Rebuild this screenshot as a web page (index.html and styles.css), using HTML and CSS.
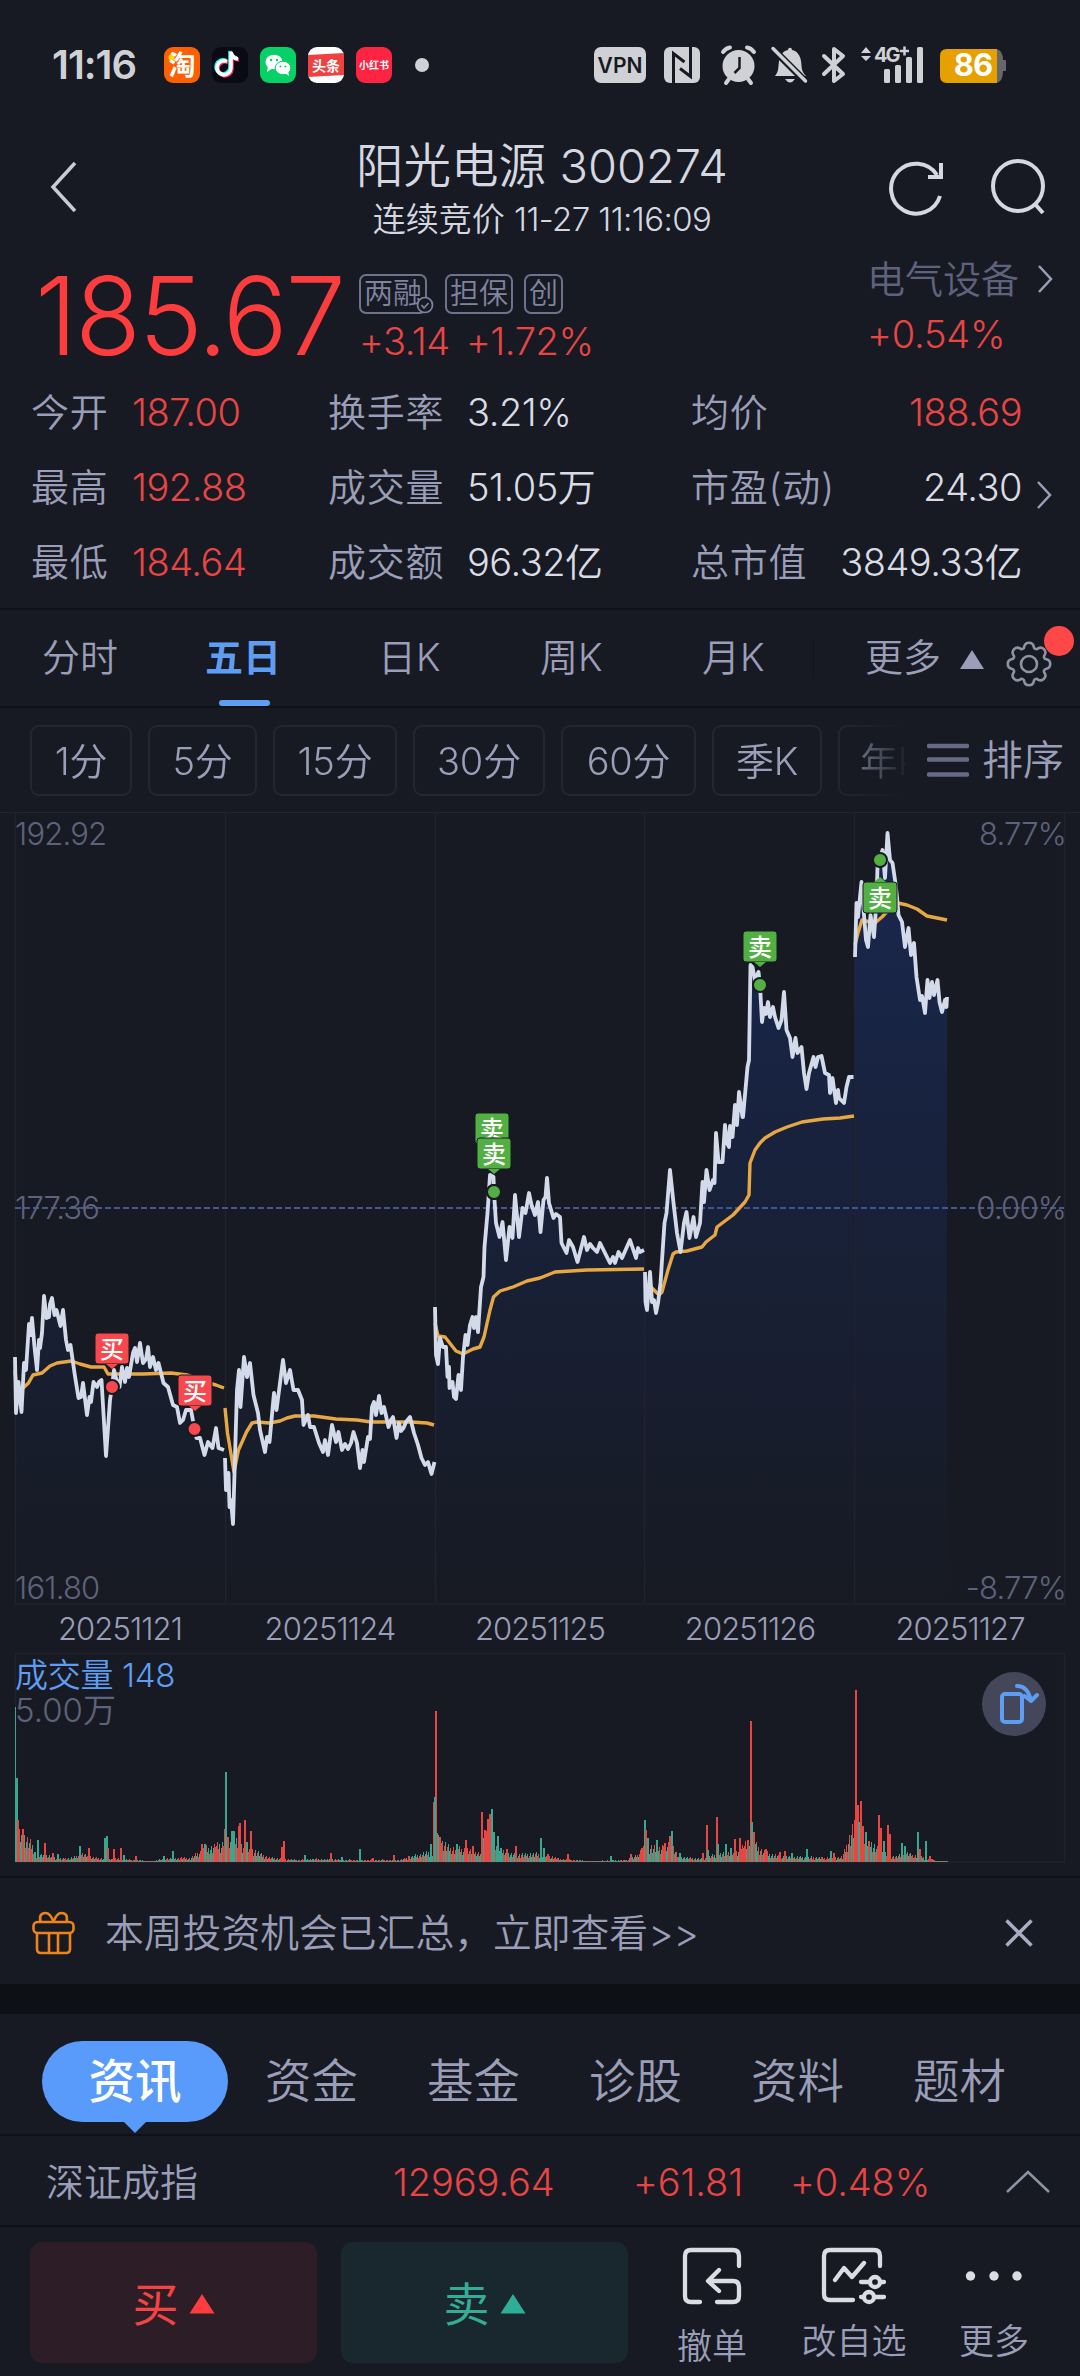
FILE: index.html
```html
<!DOCTYPE html>
<html lang="zh-CN">
<head>
    <meta charset="UTF-8">
    <meta name="viewport" content="width=device-width, initial-scale=1">
    <title>阳光电源 300274</title>
    <link rel="stylesheet" href="styles.css">
</head>
<body>
<div class="status">
    <span class="clock">11:16</span>
    <div class="apps">
        <svg width="36" height="36" viewBox="0 0 36 36"><rect width="36" height="36" rx="9" fill="#fd6000"/><circle cx="7.500" cy="10.500" r="3" fill="#ffd800"/><text class="app-text" x="18" y="28" font-size="27">淘</text></svg>
        <svg width="36" height="36" viewBox="0 0 36 36"><rect width="36" height="36" rx="9" fill="#090a14"/>
            <g fill="none" stroke-width="3.600"><path d="M17 14.500a7 7 0 1 0 4 6.500V5c.5 4 3 6.500 7 7" stroke="#ff2c55" transform="translate(-1 1)"/><path d="M17 14.500a7 7 0 1 0 4 6.500V5c.5 4 3 6.500 7 7" stroke="#25f4ee" transform="translate(-3 -1)"/><path d="M17 14.500a7 7 0 1 0 4 6.500V5c.5 4 3 6.500 7 7" stroke="#fff" transform="translate(-2 0)"/></g></svg>
        <svg width="36" height="36" viewBox="0 0 36 36"><rect width="36" height="36" rx="9" fill="#06d167"/><ellipse cx="14" cy="15" rx="8.500" ry="7.300" fill="#fff"/><path d="M8 19l-1 6 6-4z" fill="#fff"/><ellipse cx="23" cy="21" rx="7.800" ry="6.800" fill="#fff" stroke="#06d167"/><path d="M25 26l4 3-1-5z" fill="#fff"/><g fill="#06d167"><circle cx="11" cy="13" r="1.200"/><circle cx="17" cy="13" r="1.200"/><circle cx="20.500" cy="19.500" r="1"/><circle cx="25.500" cy="19.500" r="1"/></g></svg>
        <svg width="36" height="36" viewBox="0 0 36 36"><rect width="36" height="36" rx="9" fill="#fff"/><path d="M0 8l36-2v22L0 30z" fill="#f04142"/><text class="app-text" x="18" y="23.500" font-size="14">头条</text></svg>
        <svg width="36" height="36" viewBox="0 0 36 36"><rect width="36" height="36" rx="9" fill="#ff2442"/><text class="app-text" x="18" y="22" font-size="10">小红书</text></svg>
    </div>
    <i class="more-dot"></i>
    <svg class="sys" width="412" height="42" viewBox="0 0 412 42">
        <g fill="#d0d1d5">
            <rect x="0" y="3" width="52" height="36" rx="7"/>
            <text class="vpn" x="26" y="29">VPN</text>
            <rect x="70" y="3" width="36" height="36" rx="6"/>
            <g fill="none" stroke="#171a22" stroke-width="3"><path d="M79.500 40V9.500l11 8.500"/><path d="M96.500 2v30.500L86 24.500"/></g>
            <circle cx="144.500" cy="22" r="16"/>
            <g fill="none" stroke="#d0d1d5" stroke-width="4" stroke-linecap="round"><path d="M129 8q3-4 7-4.500M160 8q-3-4-7-4.500M135 35l-3 4M154 35l3 4"/></g>
            <path d="M145.500 13v11l-5 5" fill="none" stroke="#171a22" stroke-width="2.500"/>
            <path d="M181 32c4-5 3-8 4-15 1-6 4-10 9-11 0-3 4-3 4 0 5 1 8 5 9 11 1 7 0 10 5 15zM191 35h10q-5 7-10 0z"/>
            <path d="M177 3l36 36" stroke="#171a22" stroke-width="7"/><path d="M179 4.500L211.500 37" stroke="#d0d1d5" stroke-width="3.500" stroke-linecap="round"/>
            <path d="M230 12l19 18-9 7V5l9 7-19 18" fill="none" stroke="#d0d1d5" stroke-width="4" stroke-linejoin="round" stroke-linecap="round"/>
            <path d="M267 9l5-6 5 6zM267 12h10l-5 5z"/>
            <text class="net" x="280" y="18">4G</text>
            <path d="M306 7h9M310.500 2.500v9" stroke="#d0d1d5" stroke-width="2.500"/>
            <rect x="290" y="25" width="6" height="14" rx="1.500"/><rect x="301" y="21" width="6" height="18" rx="1.500"/><rect x="312" y="13" width="6" height="26" rx="1.500"/><rect x="323" y="3" width="6" height="36" rx="1.500"/>
        </g>
        <path d="M402 5q7 1 7 11h2q2 0 2 3v5q0 3-2 3h-2q0 11-7 12z" fill="#66676a"/>
        <path d="M353 5h50v34h-50q-7 0-7-7V12q0-7 7-7z" fill="#e6a100"/>
        <text class="bat" x="379" y="32">86</text>
    </svg>
</div>

<div class="header">
    <svg class="back" width="30" height="54" viewBox="0 0 30 54"><path d="M26 3L4 27l22 24" fill="none" stroke="#c9cbd6" stroke-width="3.500"/></svg>
    <div class="title">
        <h1>阳光电源 <span>300274</span></h1>
        <p>连续竞价 <span>11-27 11:16:09</span></p>
    </div>
    <div class="tools">
        <svg width="58" height="60" viewBox="0 0 58 60"><path d="M49 16A25 25 0 1 0 52 37" fill="none" stroke="#d5d7e1" stroke-width="4"/><path d="M53 4v14H40" fill="none" stroke="#d5d7e1" stroke-width="4"/></svg>
        <svg width="58" height="60" viewBox="0 0 58 60"><circle cx="28" cy="27" r="25" fill="none" stroke="#d5d7e1" stroke-width="4"/><path d="M45 45l8 9" stroke="#d5d7e1" stroke-width="4"/></svg>
    </div>
</div>

<div class="quote">
    <div class="price">185.67</div>
    <div class="delta">
        <div class="tags"><span class="tag tag-check">两融<svg width="18" height="18" viewBox="0 0 18 18"><circle cx="9" cy="9" r="7.500" fill="#171a22" stroke="#8083a0" stroke-width="1.700"/><path d="M5.500 9l2.500 3 4.500-5" fill="none" stroke="#8083a0" stroke-width="1.700"/></svg></span><span class="tag">担保</span><span class="tag">创</span></div>
        <div class="change"><span>+3.14</span><span>+1.72%</span></div>
    </div>
    <div class="sector">
        <div class="sector-name">电气设备<svg width="18" height="30" viewBox="0 0 18 30"><path d="M3 2l12 13L3 28" fill="none" stroke="#9a9eb8" stroke-width="2.500"/></svg></div>
        <div class="sector-rate">+0.54%</div>
    </div>
</div>

<div class="stats">
    <div class="stats-grid">
        <span>今开</span><b class="up">187.00</b><span>换手率</span><b>3.21%</b><span>均价</span><b class="up end">188.69</b>
        <span>最高</span><b class="up">192.88</b><span>成交量</span><b>51.05万</b><span>市盈(动)</span><b class="end">24.30</b>
        <span>最低</span><b class="up">184.64</b><span>成交额</span><b>96.32亿</b><span>总市值</span><b class="end">3849.33亿</b>
    </div>
    <svg class="stats-more" width="18" height="30" viewBox="0 0 18 30"><path d="M3 2l12 13L3 28" fill="none" stroke="#9a9eb8" stroke-width="2.500"/></svg>
</div>

<div class="tabs">
    <span>分时</span><span class="active">五日</span><span>日K</span><span>周K</span><span>月K</span>
    <i class="sep"></i>
    <span class="tab-more">更多</span>
    <svg class="tri" width="26" height="20" viewBox="0 0 26 20"><path d="M13 0l12 19H1z" fill="#9a9eb8"/></svg>
    <div class="gear">
        <svg width="50" height="50" viewBox="-25 -25 50 50" fill="none" stroke="#8d93a3" stroke-width="2.600">
            <circle r="8"/>
            <path d="M17.400-4.700A4.800 4.800 0 0 1 17.400 4.700A2.600 2.600 0 0 0 15.600 9A4.800 4.800 0 0 1 9 15.600A2.600 2.600 0 0 0 4.700 17.400A4.800 4.800 0 0 1-4.700 17.400A2.600 2.600 0 0 0-9 15.600A4.800 4.800 0 0 1-15.600 9A2.600 2.600 0 0 0-17.400 4.700A4.800 4.800 0 0 1-17.400-4.700A2.600 2.600 0 0 0-15.600-9A4.800 4.800 0 0 1-9-15.600A2.600 2.600 0 0 0-4.700-17.400A4.800 4.800 0 0 1 4.700-17.400A2.600 2.600 0 0 0 9-15.600A4.800 4.800 0 0 1 15.600-9A2.600 2.600 0 0 0 17.400-4.700z"/>
        </svg>
        <i class="badge"></i>
    </div>
</div>

<div class="periods">
    <div class="period-list">
        <span class="p1">1分</span><span class="p2">5分</span><span class="p3">15分</span><span class="p4">30分</span><span class="p5">60分</span><span class="p6">季K</span><span class="p7">年K</span>
    </div>
    <div class="sort"><svg width="42" height="34" viewBox="0 0 42 34"><path d="M2 3h38M2 16.500h38M2 31.500h38" stroke="#656a86" stroke-width="4.500" stroke-linecap="round"/></svg>排序</div>
</div>

<div class="chart">
    <svg width="1080" height="793" viewBox="0 812 1080 793">
        <defs>
            <linearGradient id="area" gradientUnits="userSpaceOnUse" x1="0" y1="833" x2="0" y2="1604">
                <stop offset="0" stop-color="#1e48b8" stop-opacity=".3"/>
                <stop offset="1" stop-color="#1e48b8" stop-opacity="0"/>
            </linearGradient>
        </defs>
        <path d="M0 812.500H1080" stroke="#232630"/>
        <path d="M15.500 813V1604H1064.500V813M225.500 813V1604M435.500 813V1604M644.500 813V1604M854.500 813V1604" fill="none" stroke="#20232e" stroke-width="1.500"/>
        <path d="M15 1208H1064" stroke="#46578a" stroke-width="2" stroke-dasharray="6 3"/>
        <g id="areas" fill="url(#area)"></g>
        <g id="averages" fill="none" stroke="#e7a844" stroke-width="3.400" stroke-linejoin="round"></g>
        <g id="prices" fill="none" stroke="#d3daea" stroke-width="3.800" stroke-linejoin="round"></g>
        <g id="marks"></g>
    </svg>
    <span class="axis top-left">192.92</span><span class="axis top-right">8.77%</span>
    <span class="axis mid-left">177.36</span><span class="axis mid-right">0.00%</span>
    <span class="axis bottom-left">161.80</span><span class="axis bottom-right">-8.77%</span>
</div>
<div class="dates"><span>20251121</span><span>20251124</span><span>20251125</span><span>20251126</span><span>20251127</span></div>

<div class="volume">
    <svg width="1080" height="225" viewBox="0 1653 1080 225">
        <path d="M15.500 1653.500H1064.500V1862H15.500z" fill="none" stroke="#20232e" stroke-width="1.500"/>
        <g id="bars" shape-rendering="crispEdges"></g>
    </svg>
    <div class="volume-label">成交量 148</div>
    <div class="volume-max">5.00万</div>
    <div class="rotate"><svg width="64" height="64" viewBox="0 0 64 64" fill="none" stroke="#5f9df2" stroke-width="4" stroke-linecap="round" stroke-linejoin="round"><rect x="20" y="22" width="20" height="28" rx="3"/><path d="M35 14q11 0 14 15M42.500 24l6.500 5 6-6"/></svg></div>
</div>

<div class="banner">
    <svg width="44" height="46" viewBox="0 0 44 46" fill="none" stroke="#ee8418" stroke-width="2.600"><rect x="1.500" y="12" width="40" height="11" rx="4"/><path d="M5 23v16q0 4 4 4h25q4 0 4-4V23M17 23v20M26 23v20M21.500 12q-3-9-8-9-7 0-5 9M21.500 12q3-9 8-9 7 0 5 9"/></svg>
    <p>本周投资机会已汇总，立即查看&gt;&gt;</p>
    <svg width="28" height="28" viewBox="0 0 28 28"><path d="M1.500 1.500l25 25M26.500 1.500l-25 25" stroke="#a9adc4" stroke-width="3.500"/></svg>
</div>
<div class="band"></div>

<div class="info-tabs">
    <span class="pill">资讯</span><span>资金</span><span>基金</span><span>诊股</span><span>资料</span><span>题材</span>
</div>

<div class="index-row">
    <span class="index-name">深证成指</span><span class="index-value">12969.64</span><span class="index-diff">+61.81</span><span class="index-rate">+0.48%</span>
    <svg width="44" height="24" viewBox="0 0 44 24"><path d="M1 22L22 2l21 20" fill="none" stroke="#8d93a3" stroke-width="2.500"/></svg>
</div>

<div class="actions">
    <div class="buy">买<svg width="26" height="20" viewBox="0 0 26 20"><path d="M13 0l12.500 19.500H.5z" fill="#fd3d3d"/></svg></div>
    <div class="sell">卖<svg width="26" height="20" viewBox="0 0 26 20"><path d="M13 0l12.500 19.500H.5z" fill="#2eae96"/></svg></div>
    <div class="act act-cancel">
        <svg width="60" height="60" viewBox="0 0 60 60" fill="none" stroke="#dcdde4" stroke-width="4.300" stroke-linecap="round" stroke-linejoin="round"><path d="M57 19V9q0-6-6-6H9Q3 3 3 9v40q0 6 6 6h9M35 55h16q6 0 6-6V40q0-6-6-6H27M37 23L26 34l11 10"/></svg>
        <span>撤单</span>
    </div>
    <div class="act act-fav">
        <svg width="66" height="60" viewBox="0 0 66 60" fill="none" stroke="#dcdde4" stroke-width="4.300" stroke-linecap="round" stroke-linejoin="round"><path d="M59 19V9q0-6-6-6H9Q3 3 3 9v38q0 6 6 6h23M14 33l9-12 8 9 12-14M40 35h8M60 35h3M40 50h2M54 50h9"/><circle cx="54" cy="35" r="5"/><circle cx="48" cy="50" r="5"/></svg>
        <span>改自选</span>
    </div>
    <div class="act act-more">
        <svg width="60" height="60" viewBox="0 0 60 60" fill="#dcdde4"><circle cx="6.500" cy="29" r="4.700"/><circle cx="30" cy="29" r="4.700"/><circle cx="53" cy="29" r="4.700"/></svg>
        <span>更多</span>
    </div>
</div>
<script src="chart.js"></script>
</body>
</html>
```
FILE: styles.css
```css
* {
    box-sizing: border-box;
}

body {
    margin: 0;
    width: 1080px;
    height: 2376px;
    overflow: hidden;
    background: #171a22;
    color: #9a9eb8;
    font-family: Inter, "Noto Sans CJK SC", sans-serif;
    font-weight: 350;
    font-size: 38px;
    line-height: 1;
    white-space: nowrap;
}

h1, p {
    margin: 0;
    font-weight: 350;
}

svg {
    display: block;
    flex: none;
}

/* 状态栏 */
.status {
    display: flex;
    align-items: center;
    height: 130px;
    padding-left: 52px;
}

.clock {
    width: 112px;
    font-size: 40px;
    font-weight: 600;
    letter-spacing: -1px;
    color: #d0d1d5;
}

.apps {
    display: flex;
    gap: 12px;
}

.app-text {
    fill: #fff;
    font-weight: 700;
    text-anchor: middle;
}

.more-dot {
    width: 14px;
    height: 14px;
    margin: 0 165px 0 23px;
    border-radius: 50%;
    background: #d0d1d5;
}

.vpn {
    fill: #171a22;
    font-size: 21px;
    font-weight: 600;
    text-anchor: middle;
}

.net {
    fill: #d0d1d5;
    font-size: 20px;
    font-weight: 700;
    letter-spacing: -2px;
}

.bat {
    fill: #fff;
    font-size: 31px;
    font-weight: 700;
    letter-spacing: -1px;
    text-anchor: middle;
}

/* 标题 */
.header {
    display: flex;
    align-items: center;
    height: 120px;
    padding: 0 32px 0 49px;
    color: #d5d7e1;
}

.back {
    margin-top: -6px;
}

.title {
    width: 380px;
    margin-left: 273px;
    text-align: center;
}

.title h1 {
    height: 57px;
    line-height: 57px;
    font-size: 47.5px;
}

.title h1 span {
    font-size: 47px;
}

.title p {
    height: 49px;
    line-height: 51px;
    font-size: 33px;
}

.title p span {
    letter-spacing: -.6px;
}

.tools {
    display: flex;
    gap: 44px;
    margin: -3px 0 0 auto;
}

/* 报价 */
.quote {
    display: flex;
    height: 124px;
    padding: 22px 0 0 35px;
    color: #e84545;
}

.price {
    width: 324px;
    line-height: 87px;
    font-size: 108px;
    font-weight: 350;
    letter-spacing: -2.4px;
    color: #fd3d3d;
}

.tags {
    display: flex;
    gap: 11px;
    height: 42px;
    padding-top: 2px;
}

.tag {
    position: relative;
    height: 40px;
    padding: 0 3px;
    border: 2px solid #6f728d;
    border-radius: 7px;
    line-height: 36px;
    font-size: 29px;
    color: #8083a0;
}

.tag-check {
    margin-right: 7px;
}

.tag-check svg {
    position: absolute;
    right: -9px;
    bottom: -2px;
}

.change {
    display: flex;
    gap: 16px;
    padding-top: 8px;
    letter-spacing: -.4px;
}

.sector {
    margin-left: auto;
    width: 213px;
}

.sector-name {
    display: flex;
    justify-content: space-between;
    align-items: center;
    width: 187px;
    height: 36px;
    margin-top: -11px;
    color: #5e627c;
}

.sector-rate {
    padding-top: 18px;
    letter-spacing: -.2px;
}

/* 行情数据 */
.stats {
    display: flex;
    align-items: center;
    height: 236px;
    padding-left: 31px;
    border-bottom: 2px solid #0e1118;
}

.stats-grid {
    display: grid;
    grid-template-columns: 100px 197px 138px 225px 140px 191px;
    grid-auto-rows: 75px;
    align-items: center;
    margin-top: -8px;
}

.stats-grid span {
    letter-spacing: .7px;
}

.stats-grid b {
    padding-left: 1px;
    font-weight: 350;
    letter-spacing: -.5px;
    color: #dadce5;
}

.stats-grid .up {
    color: #e84545;
}

.stats-grid .end {
    text-align: right;
}

.stats-more {
    margin: 8px 0 0 13px;
}

/* 主标签 */
.tabs {
    display: flex;
    align-items: center;
    position: relative;
    height: 98px;
    padding-left: 42px;
    border-bottom: 2px solid #0e1118;
}

.tabs span {
    width: 162px;
    height: 96px;
    line-height: 95px;
}

.tabs .active {
    width: 174px;
    padding-left: 1px;
    color: #5f9df2;
    font-weight: 700;
}

.active::after {
    content: "";
    display: block;
    width: 51px;
    height: 6px;
    margin: -5px 0 0 14px;
    border-radius: 3px;
    background: #5f9df2;
}

.sep {
    width: 1px;
    height: 40px;
    margin: 0 51px 0 -51px;
    background: #10131a;
}

.tabs .tab-more {
    width: 94px;
}

.tri {
    margin-top: 4px;
}

.gear {
    position: relative;
    margin: 11px 0 0 19px;
}

.badge {
    position: absolute;
    left: 40px;
    top: -13px;
    width: 30px;
    height: 30px;
    border-radius: 50%;
    background: #fe4848;
}

/* 周期 */
.periods {
    display: flex;
    align-items: center;
    height: 104px;
    padding-left: 30px;
}

.period-list {
    display: flex;
    gap: 16px;
    width: 875px;
    overflow: hidden;
    -webkit-mask-image: linear-gradient(90deg, #000 800px, transparent 880px);
    mask-image: linear-gradient(90deg, #000 800px, transparent 880px);
}

.period-list span {
    flex: none;
    height: 71px;
    border: 2px solid #242733;
    border-radius: 9px;
    line-height: 69px;
    text-align: center;
    letter-spacing: -.2px;
}

.p1 { width: 102px; }
.p2 { width: 109px; }
.p3 { width: 124px; }
.p4 { width: 132px; }
.p5 { width: 135px; }
.p6 { width: 110px; }
.p7 { width: 106px; }

.sort {
    display: flex;
    align-items: center;
    gap: 13px;
    margin-left: 22px;
    font-size: 41px;
}

/* 走势图 */
.chart {
    position: relative;
    height: 793px;
}

.axis {
    position: absolute;
    font-size: 31px;
    letter-spacing: -.8px;
    color: #5e627c;
}

.top-left, .mid-left, .bottom-left { left: 15px; }
.top-right, .mid-right, .bottom-right { right: 14px; }
.top-left, .top-right { top: 6px; }
.mid-left, .mid-right { top: 380px; }
.bottom-left, .bottom-right { top: 760px; }

.mark {
    fill: #fff;
    font-size: 24px;
    font-weight: 500;
    text-anchor: middle;
}

.dates {
    display: flex;
    height: 48px;
    padding-left: 15px;
    line-height: 48px;
    font-size: 31px;
    letter-spacing: -.9px;
}

.dates span {
    width: 210px;
    text-align: center;
}

.volume {
    position: relative;
    height: 225px;
    border-bottom: 2px solid #0e1118;
}

.volume-label {
    position: absolute;
    left: 15px;
    top: 6px;
    font-size: 33px;
    letter-spacing: -.3px;
    color: #5f9df2;
}

.volume-max {
    position: absolute;
    left: 15px;
    top: 41px;
    font-size: 33px;
    color: #5e627c;
}

.rotate {
    position: absolute;
    left: 982px;
    top: 19px;
    border-radius: 50%;
    background: #434759;
}

/* 提示条 */
.banner {
    display: flex;
    align-items: center;
    height: 106px;
    padding: 4px 47px 0 32px;
}

.banner p {
    width: 900px;
    margin-left: 29px;
    font-size: 38.8px;
}

.band {
    height: 30px;
    background: #0d1015;
}

.info-tabs {
    display: flex;
    height: 122px;
    padding: 27px 0 0 42px;
    border-bottom: 2px solid #0e1118;
    line-height: 81px;
    font-size: 46.5px;
}

.info-tabs span {
    width: 162px;
}

.info-tabs .pill {
    position: relative;
    width: 186px;
    height: 81px;
    margin-right: 37px;
    border-radius: 41px;
    text-align: center;
    background: #589bfb;
    color: #fff;
    font-weight: 500;
}

.pill::after {
    content: "";
    position: absolute;
    left: 81px;
    top: 80px;
    border: 12px solid transparent;
    border-top-color: #589bfb;
    border-bottom-width: 0;
}

.index-row {
    display: flex;
    align-items: center;
    height: 91px;
    padding: 2px 0 0 46px;
    border-bottom: 2px solid #0e1118;
    color: #e84545;
}

.index-name {
    width: 347px;
    color: #9a9eb8;
}

.index-value, .index-diff, .index-rate {
    letter-spacing: -.1px;
}

.index-value { width: 240px; }
.index-diff { width: 157px; }
.index-rate { width: 216px; }

/* 底部操作 */
.actions {
    display: flex;
    padding: 15px 0 0 30px;
}

.buy, .sell {
    display: flex;
    align-items: center;
    justify-content: center;
    gap: 10px;
    width: 287px;
    height: 121px;
    margin-right: 24px;
    padding-top: 3px;
    border-radius: 12px;
    font-size: 46px;
    font-weight: 400;
}

.buy {
    background: #2d1d26;
    color: #f54343;
}

.sell {
    background: #19272e;
    color: #35ad96;
}

.act {
    display: flex;
    flex-direction: column;
    align-items: center;
    padding-top: 5px;
    font-size: 35px;
}

.act span {
    margin-top: 17px;
}

.act-cancel {
    width: 120px;
}

.act-cancel span {
    margin-top: 22px;
}

.act-fav {
    width: 160px;
    margin-left: 2px;
}

.act-more {
    width: 120px;
}
```
FILE: chart.js
```js
var BOTTOM = 1604;

// 五日分时价格，每天一组 x,y
var prices = [
    '15,1357 16,1413 18.5,1382 21.5,1412 24,1363 26,1370 29,1324 30.500,1335 32,1318 34.5,1347 37,1370 39,1340 40,1348 42,1333 44,1296 46.5,1318 49,1317 50,1304 52,1298 54.5,1315 56.5,1310 60.5,1326 63,1310 66,1340 68,1350 70.5,1345 74.5,1373 78.5,1398 81,1397 83,1383 87,1415 89.5,1397 91,1402 93.5,1382 97,1387 99,1382 101.5,1380 106,1456 110,1400 112,1387 114,1370 117,1382 119.5,1387 122,1367 125,1382 127,1368 129,1377 133,1353 135,1348 137,1362 140,1343 143,1363 146,1359 148,1347 150,1367 153,1357 156,1370 158.5,1363 163.5,1383 168,1387 173,1405 177,1407 180,1423 183,1420 186,1410 191,1410 194.5,1429 196.5,1438 200,1438 204.5,1455 208,1442 212.5,1448 216,1428 218.5,1448 224,1450',
    '225,1458 226,1490 228.5,1473 229.5,1507 231,1500 233,1524 235.5,1440 237,1390 239,1370 240.5,1407 244,1357 247,1377 250,1363 253.5,1395 258,1413 260,1430 265,1452 267,1437 269.5,1442 274,1393 276.5,1410 280,1383 283,1360 286,1383 290,1370 293.5,1390 298,1390 302,1400 303.5,1425 308,1415 310,1427 314,1427 319,1443 323,1452 325,1440 328,1455 332,1425 336,1442 338.5,1432 342,1450 345,1444 348,1449 351,1443 353.5,1432 357,1443 360,1468 362.5,1450 364,1462 368,1437 370,1439 372,1407 374,1402 376,1415 379,1396 381.5,1413 384,1407 388.5,1427 391,1420 393,1417 396.5,1438 399,1423 401,1431 403.5,1428 406,1422 410,1417 414,1433 418,1445 421.5,1458 425,1465 428,1462 431.5,1474 434.5,1462',
    '435,1307 436,1355 438,1364 440,1338 443,1347 446,1347 447.5,1377 449,1367 449.5,1388 452.5,1382 454,1397 456,1399 458.5,1375 461,1390 463,1357 465.5,1335 467.5,1345 470,1325 472.5,1317 474,1328 476,1317 478,1332 481,1287 483.5,1277 484.5,1247 487.5,1213 490,1175 493.5,1177 494,1192 496,1223 499.5,1237 502.5,1222 506,1260 509.5,1227 512.5,1238 515,1195 519,1237 522.5,1208 525.5,1213 529,1193 531.5,1205 535,1215 538,1202 540.5,1232 543.5,1200 545.5,1197 547,1178 549,1203 553.5,1218 556,1214 560,1217 561.5,1243 566.5,1253 569,1240 573,1247 577.5,1262 584,1237 587,1250 590,1244 593,1248 597,1252 600,1243 605,1253 610,1263 613,1257 615,1263 618.5,1252 622,1258 630,1240 636,1258 638,1248 640,1252 644,1250',
    '645,1272 645.500,1302 647,1310 650,1272 652,1302 654,1300 656,1313 658,1303 660.5,1283 664.5,1223 666.5,1213 670,1170 673.5,1203 677,1233 680.5,1252 684,1223 686.5,1212 689.5,1238 693.5,1217 696,1237 700,1223 702.5,1182 704,1202 706.5,1170 709.5,1190 713,1180 714.5,1183 716,1133 718.5,1162 722.5,1162 725,1125 727,1143 729,1147 730,1126 732.5,1137 735,1105 737,1125 739,1092 742.5,1117 743,1117 747.5,1067 749,1060 750.5,965 752.5,967 755,980 758.5,972 760,985 762,1022 764,1008 766,1014 768,1002 770,1017 773,1007 775,1017 778.5,1028 781.5,1020 784,992 786.5,1030 790,1038 792.5,1057 795.5,1038 797.5,1053 801.5,1047 804,1073 806.5,1089 809,1073 813.5,1057 815.5,1067 818,1057 821.5,1056 825,1073 829,1075 830,1093 832.5,1078 836,1103 838,1090 839,1098 844,1103 846.5,1087 849,1077 853.5,1077',
    '855,957 856.5,903 858,917 861.5,882 864,915 866,940 868,947 870.5,915 874,937 876.5,900 877.5,867 880,860 882.5,850 885,878 887.5,833 890,860 892.5,863 895,880 897,897 898.5,915 902,922 905,947 908.5,928 911,955 914,943 916.5,977 920,1000 922,996 925,1013 927.5,980 929.5,998 932,982 934,995 937.5,980 939.5,1002 942,1012 945,1000 946.5,1007 947,997'
];

var averages = [
    '15,1370 16,1382 19,1390 22,1389 28.5,1383 33,1375 42,1373 50,1366 57,1363 71.5,1361 80,1364 91,1367 104,1367 108,1374 143,1374 171,1373 187.5,1375 212.5,1384 216,1385 224,1388',
    '225,1408 227.5,1433 234,1472 238.5,1450 246.5,1432 252,1423 257,1422 269.5,1423 280,1421 287,1418 295,1416 314,1416 336,1419 357,1420 371,1422 411,1422 427,1423 434,1425',
    '435,1323 438,1336 445,1337 456,1351 463,1354 473,1349 480,1347 484,1337 490,1310 493.5,1297 500,1291 513,1287 527,1281 540,1278 555,1272 587,1270 644,1269',
    '645,1287 652,1288 659,1295 662,1292 668,1270 673,1254 676,1252 687,1251 702,1247 706,1242 715,1235 717,1227 733,1215 745,1202 749,1195 750,1163 755,1150 760,1143 765,1138 775,1132 787,1127 802,1122 823,1119 840,1118 854,1116',
    '855,945 858,933 862,920 870,922 875,923 882,917 893,905 898,903 907,905 917,909 927,916 937,918 947,920'
];

function add(id, markup) {
    document.getElementById(id).innerHTML += markup;
}

prices.forEach(function (points) {
    var list = points.split(' ');
    var x0 = list[0].split(',')[0];
    var x1 = list[list.length - 1].split(',')[0];
    add('areas', '<polygon points="' + x0 + ',' + BOTTOM + ' ' + points + ' ' + x1 + ',' + BOTTOM + '"/>');
    add('prices', '<polyline points="' + points + '"/>');
});
averages.forEach(function (points) {
    add('averages', '<polyline points="' + points + '"/>');
});

// 买卖点：文字、标签左上角、圆点
var marks = [
    ['买', 95, 1333, 112, 1387],
    ['买', 178, 1375, 194.5, 1429],
    ['卖', 475, 1113, 494, 1192],
    ['卖', 477, 1138, 494, 1192],
    ['卖', 743, 931, 760, 985],
    ['卖', 863, 882, 880, 860]
];
marks.forEach(function (m) {
    var color = m[0] === '买' ? '#f8484d' : '#52b043';
    var x = m[1], y = m[2], cx = x + 17;
    var up = m[4] < y;
    var arrow = up ? 'M' + (cx - 6) + ' ' + y + 'l6-5 6 5z' : 'M' + (cx - 6) + ' ' + (y + 31) + 'l6 5 6-5z';
    add('marks', '<g fill="' + color + '"><rect x="' + x + '" y="' + y + '" width="34" height="31" rx="3" stroke="#171a22"/>' +
        '<path d="' + arrow + '"/><circle cx="' + m[3] + '" cy="' + m[4] + '" r="7" stroke="#171a22" stroke-width="2"/></g>' +
        '<text class="mark" x="' + cx + '" y="' + (y + 24.5) + '">' + m[0] + '</text>');
});

// 成交量：底部轮廓 [x, 高]
var base = [[15, 28], [24, 24], [32, 16], [36, 7], [48, 6], [60, 3], [72, 4], [80, 8], [90, 5], [103, 3], [120, 3], [150, 1], [172, 4], [190, 4], [205, 13], [224, 18], [236, 20], [252, 12], [266, 5], [280, 3], [300, 2], [310, 3], [345, 2], [400, 2], [418, 7], [432, 10], [436, 24], [448, 14], [465, 12], [480, 8], [484, 28], [492, 28], [500, 10], [515, 7], [540, 8], [560, 3], [590, 1], [626, 2], [636, 6], [645, 16], [656, 14], [672, 16], [678, 5], [700, 3], [716, 7], [735, 10], [750, 20], [765, 9], [780, 5], [830, 4], [842, 5], [855, 40], [868, 20], [880, 10], [895, 5], [905, 9], [915, 6], [930, 3], [938, 1], [948, 1]];
// 高量柱 [x, 高, 涨跌]
var peaks = [
    [15, 155, 0], [16, 84, 0], [17, 42, 1], [22, 33, 1], [37, 22, 0], [44, 19, 1], [52, 9, 1], [57, 8, 0], [79, 16, 0], [88, 14, 1], [104, 24, 0], [106, 26, 0], [107, 14, 1], [113, 13, 1], [120, 14, 1], [123, 7, 0], [135, 6, 1], [163, 6, 0], [172, 11, 0], [201, 18, 1], [204, 18, 0], [215, 15, 1], [222, 16, 1],
    [224, 33, 1], [225, 90, 0], [227, 25, 1], [231, 31, 0], [233, 31, 0], [238, 36, 1], [239, 39, 1], [244, 42, 1], [246, 20, 0], [250, 31, 1], [281, 15, 1], [283, 21, 1], [304, 7, 0], [330, 9, 1], [341, 5, 0], [359, 13, 0], [372, 4, 1], [393, 7, 1], [408, 6, 1], [430, 18, 0],
    [433, 60, 1], [435, 151, 1], [434, 65, 0], [437, 27, 0], [439, 25, 1], [441, 19, 1], [456, 18, 0], [465, 22, 1], [472, 16, 1], [481, 50, 1], [484, 32, 1], [487, 43, 1], [489, 48, 1], [491, 53, 0], [493, 30, 0], [497, 26, 0], [500, 14, 0], [506, 13, 1], [515, 16, 1], [540, 24, 0], [543, 14, 0], [547, 8, 1], [567, 8, 1], [610, 6, 0], [630, 8, 1], [641, 14, 1],
    [644, 42, 0], [645, 32, 1], [647, 24, 0], [656, 22, 0], [662, 16, 1], [664, 19, 1], [669, 26, 1], [671, 31, 0], [679, 9, 0], [702, 9, 1], [706, 37, 1], [707, 12, 0], [716, 45, 1], [717, 18, 0], [725, 18, 0], [730, 14, 0], [734, 23, 1], [739, 24, 1], [742, 14, 1], [747, 22, 1], [750, 141, 1], [751, 40, 0], [753, 30, 1], [755, 18, 0], [765, 13, 1], [779, 10, 1], [784, 11, 1], [791, 9, 0], [806, 13, 0], [821, 5, 1], [830, 11, 0], [833, 9, 1], [849, 16, 1],
    [854, 42, 1], [855, 172, 1], [857, 57, 1], [858, 40, 0], [860, 61, 1], [862, 36, 1], [865, 30, 0], [868, 21, 1], [878, 47, 1], [880, 34, 1], [883, 21, 0], [887, 37, 1], [889, 28, 1], [901, 19, 0], [904, 16, 0], [917, 30, 0], [919, 13, 1], [925, 21, 0], [929, 6, 1]
];

function bar(x, h, up, w) {
    return '<rect x="' + x + '" y="' + (1862 - h) + '" width="' + w + '" height="' + h + '" fill="' + (up ? '#e84543' : '#37a88e') + '"/>';
}

var html = '';
for (var i = 0, x = 15; x < 948; x++) {
    while (base[i + 1][0] <= x) i++;
    var t = (x - base[i][0]) / (base[i + 1][0] - base[i][0]);
    var h = base[i][1] + (base[i + 1][1] - base[i][1]) * t;
    h = Math.max(1, Math.round(h * (.55 + (x * 37 % 11) / 14)));
    html += bar(x, h, (x * 29 % 17) % 2, 1);
}
peaks.forEach(function (p) {
    html += bar(p[0], p[1], p[2], p[0] === 15 ? 1 : 2);
});
add('bars', html);
```
